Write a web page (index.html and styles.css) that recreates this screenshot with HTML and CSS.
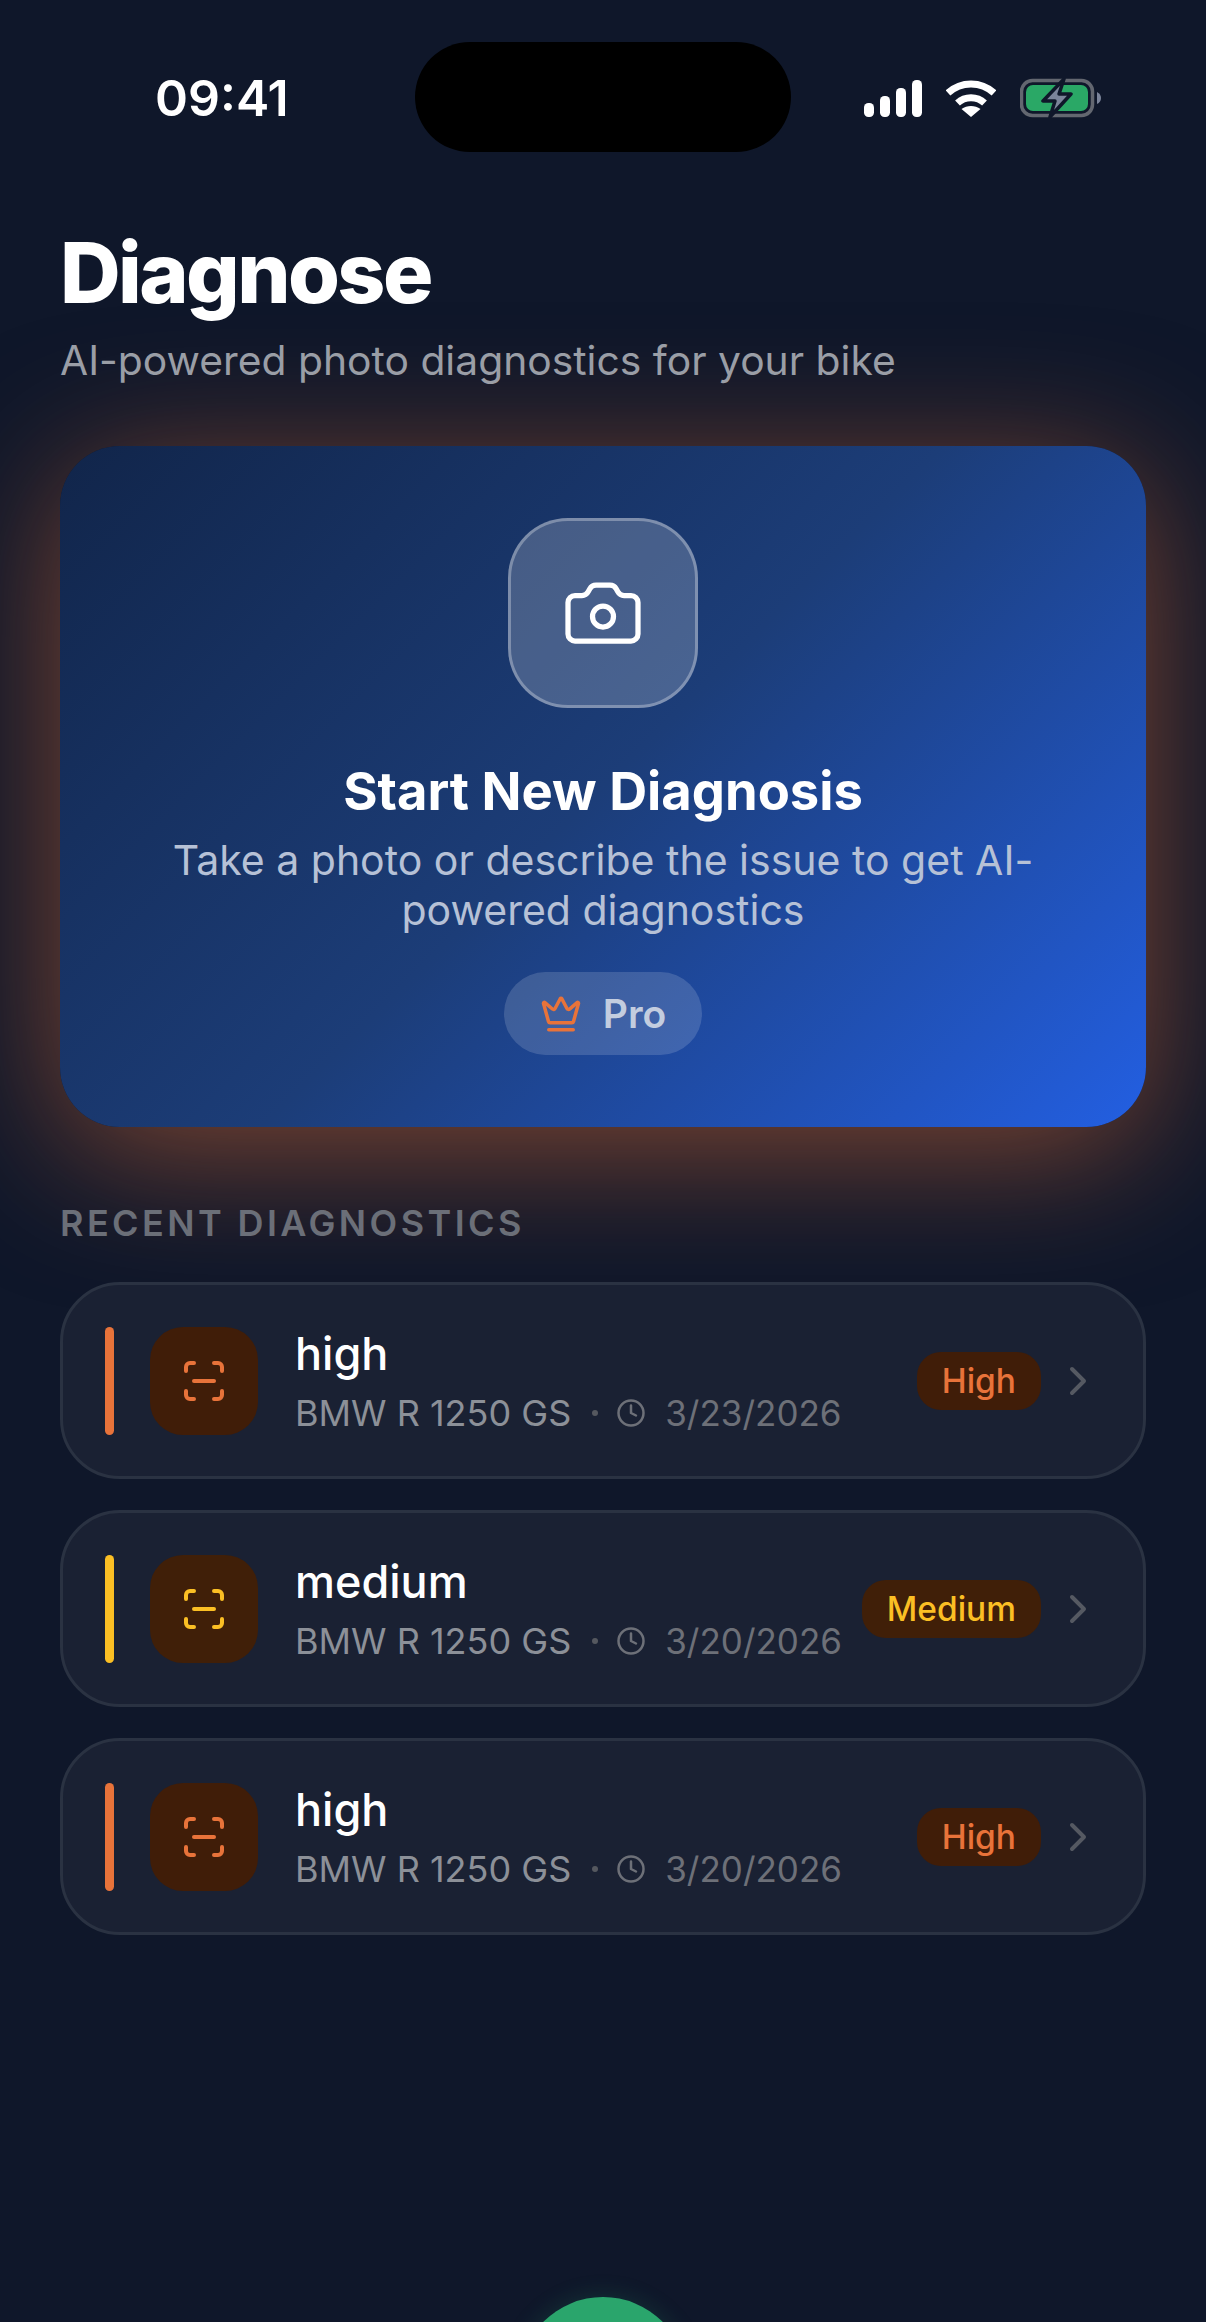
FILE: index.html
```html
<!DOCTYPE html>
<html lang="en">

<head>
	<meta charset="UTF-8">
	<meta name="viewport" content="width=device-width, initial-scale=1.0">
	<title>Diagnose</title>

	<link rel="stylesheet" href="styles.css">
</head>

<body>

	<div class="phone">

		<div class="status-bar">
			<span class="status-time">09:41</span>
			<div class="status-icons">
				<svg class="icon-signal" viewBox="0 0 58 37">
					<rect x="0" y="23" width="10" height="14" rx="4.5" />
					<rect x="16" y="16" width="10" height="21" rx="4.5" />
					<rect x="32" y="8" width="10" height="29" rx="4.5" />
					<rect x="48" y="0" width="10" height="37" rx="4.5" />
				</svg>
				<svg class="icon-wifi" viewBox="0 0 50 37">
					<path d="M2 13 C15 1 35 1 48 13" />
					<path d="M11.5 23 C19 16 31 16 38.5 23" />
					<path class="wifi-dot" d="M25 37 L15.5 29 C21 25 29 25 34.5 29 Z" />
				</svg>
				<svg class="icon-battery" viewBox="0 0 82 40">
					<rect x="1.5" y="2.5" width="71" height="35" rx="11" fill="none" stroke="#636770" stroke-width="3.5" />
					<rect x="6" y="7" width="62" height="26" rx="7" fill="#2aa866" />
					<path d="M77 14 Q81 16 81 20 Q81 24 77 26 Z" fill="#7b849a" />
					<path d="M44 1 L23 23 H35 L30 39 L51 16 H39 Z" fill="#7b849a" stroke="#0f172a" stroke-width="3.5" stroke-linejoin="round" />
				</svg>
			</div>
		</div>

		<div class="island"></div>

		<main class="content">

			<h1 class="page-title">Diagnose</h1>
			<p class="page-sub">AI-powered photo diagnostics for your bike</p>

			<section class="start-card">
				<div class="camera-box">
					<svg class="lucide icon-camera" viewBox="0 0 24 24">
						<path d="M13.997 4a2 2 0 0 1 1.76 1.05l.486.9A2 2 0 0 0 18.003 7H20a2 2 0 0 1 2 2v9a2 2 0 0 1-2 2H4a2 2 0 0 1-2-2V9a2 2 0 0 1 2-2h1.997a2 2 0 0 0 1.759-1.048l.489-.904A2 2 0 0 1 10.004 4z" />
						<circle cx="12" cy="13" r="3" />
					</svg>
				</div>
				<h2 class="start-title">Start New Diagnosis</h2>
				<p class="start-text">Take a photo or describe the issue to get AI-powered diagnostics</p>
				<div class="pro-pill">
					<svg class="lucide icon-crown" viewBox="0 0 24 24">
						<path d="M11.562 3.266a.5.5 0 0 1 .876 0L15.39 8.87a1 1 0 0 0 1.516.294L21.183 5.5a.5.5 0 0 1 .798.519l-2.834 10.246a1 1 0 0 1-.956.734H5.81a1 1 0 0 1-.957-.734L2.02 6.02a.5.5 0 0 1 .798-.519l4.276 3.664a1 1 0 0 0 1.516-.294z" />
						<path d="M5 21h14" />
					</svg>
					<span>Pro</span>
				</div>
			</section>

			<h3 class="section-label">RECENT DIAGNOSTICS</h3>

			<ul class="diag-list">
				<li class="diag-item high">
					<span class="diag-bar"></span>
					<div class="diag-icon">
						<svg class="lucide icon-scan" viewBox="0 0 24 24">
							<path d="M3 7V5a2 2 0 0 1 2-2h2" />
							<path d="M17 3h2a2 2 0 0 1 2 2v2" />
							<path d="M21 17v2a2 2 0 0 1-2 2h-2" />
							<path d="M7 21H5a2 2 0 0 1-2-2v-2" />
							<path d="M7 12h10" />
						</svg>
					</div>
					<div class="diag-info">
						<div class="diag-name">high</div>
						<div class="diag-meta">
							<span>BMW R 1250 GS</span>
							<span class="meta-dot"></span>
							<svg class="lucide icon-clock" viewBox="0 0 24 24">
								<circle cx="12" cy="12" r="10" />
								<path d="M12 6v6l4 2" />
							</svg>
							<span class="meta-date">3/23/2026</span>
						</div>
					</div>
					<span class="diag-badge">High</span>
					<svg class="lucide icon-chevron" viewBox="0 0 24 24">
						<path d="m9 18 6-6-6-6" />
					</svg>
				</li>
				<li class="diag-item medium">
					<span class="diag-bar"></span>
					<div class="diag-icon">
						<svg class="lucide icon-scan" viewBox="0 0 24 24">
							<path d="M3 7V5a2 2 0 0 1 2-2h2" />
							<path d="M17 3h2a2 2 0 0 1 2 2v2" />
							<path d="M21 17v2a2 2 0 0 1-2 2h-2" />
							<path d="M7 21H5a2 2 0 0 1-2-2v-2" />
							<path d="M7 12h10" />
						</svg>
					</div>
					<div class="diag-info">
						<div class="diag-name">medium</div>
						<div class="diag-meta">
							<span>BMW R 1250 GS</span>
							<span class="meta-dot"></span>
							<svg class="lucide icon-clock" viewBox="0 0 24 24">
								<circle cx="12" cy="12" r="10" />
								<path d="M12 6v6l4 2" />
							</svg>
							<span class="meta-date">3/20/2026</span>
						</div>
					</div>
					<span class="diag-badge">Medium</span>
					<svg class="lucide icon-chevron" viewBox="0 0 24 24">
						<path d="m9 18 6-6-6-6" />
					</svg>
				</li>
				<li class="diag-item high">
					<span class="diag-bar"></span>
					<div class="diag-icon">
						<svg class="lucide icon-scan" viewBox="0 0 24 24">
							<path d="M3 7V5a2 2 0 0 1 2-2h2" />
							<path d="M17 3h2a2 2 0 0 1 2 2v2" />
							<path d="M21 17v2a2 2 0 0 1-2 2h-2" />
							<path d="M7 21H5a2 2 0 0 1-2-2v-2" />
							<path d="M7 12h10" />
						</svg>
					</div>
					<div class="diag-info">
						<div class="diag-name">high</div>
						<div class="diag-meta">
							<span>BMW R 1250 GS</span>
							<span class="meta-dot"></span>
							<svg class="lucide icon-clock" viewBox="0 0 24 24">
								<circle cx="12" cy="12" r="10" />
								<path d="M12 6v6l4 2" />
							</svg>
							<span class="meta-date">3/20/2026</span>
						</div>
					</div>
					<span class="diag-badge">High</span>
					<svg class="lucide icon-chevron" viewBox="0 0 24 24">
						<path d="m9 18 6-6-6-6" />
					</svg>
				</li>
			</ul>

		</main>

		<div class="fab"></div>

	</div>

</body>

</html>
```

FILE: styles.css
```css
* {
	padding: 0;
	margin: 0;
	box-sizing: border-box;
}

ul {
	list-style: none;
}

body {
	background-color: #0f172a;
	font-family: "Inter", "Liberation Sans", sans-serif;
	color: #fff;
}

.phone {
	position: relative;
	width: 1206px;
	height: 2322px;
	overflow: hidden;
	background-color: #0f172a;
}

/* status bar */

.status-bar {
	display: flex;
	justify-content: space-between;
	align-items: center;
	height: 98px;
	margin-top: 49px;
	padding: 0 104px 0 155px;
}

.status-time {
	font-size: 50px;
	font-weight: 600;
}

.status-icons {
	display: flex;
	align-items: center;
	gap: 24px;
}

.icon-signal {
	width: 58px;
	height: 37px;
	fill: #fff;
}

.icon-wifi {
	width: 50px;
	height: 37px;
}

.icon-wifi path {
	fill: none;
	stroke: #fff;
	stroke-width: 7;
}

.icon-wifi .wifi-dot {
	fill: #fff;
	stroke: none;
}

.icon-battery {
	width: 82px;
	height: 40px;
}

.island {
	position: absolute;
	top: 42px;
	left: 415px;
	width: 376px;
	height: 110px;
	border-radius: 55px;
	background-color: #000;
}

/* page */

.content {
	padding: 0 60px;
}

.lucide {
	fill: none;
	stroke: currentColor;
	stroke-width: 2;
	stroke-linecap: round;
	stroke-linejoin: round;
}

.page-title {
	margin-top: 79px;
	font-size: 84px;
	font-weight: 800;
	line-height: 94px;
	letter-spacing: -2.6px;
}

.page-sub {
	margin-top: 16px;
	font-size: 40.8px;
	line-height: 48px;
	color: #9a9ea6;
}

/* start card */

.start-card {
	display: flex;
	flex-direction: column;
	align-items: center;
	height: 681px;
	margin-top: 62px;
	padding: 72px 72px 0;
	border-radius: 60px;
	background: linear-gradient(135deg, #11254a 0%, #1c3d78 50%, #235fe2 100%);
	box-shadow: 0 24px 140px rgba(232, 115, 58, 0.52);
	text-align: center;
}

.camera-box {
	display: flex;
	justify-content: center;
	align-items: center;
	width: 190px;
	height: 190px;
	border: 3px solid rgba(255, 255, 255, 0.3);
	border-radius: 60px;
	background-color: rgba(255, 255, 255, 0.2);
}

.icon-camera {
	width: 84px;
	height: 84px;
	stroke-width: 1.5;
}

.start-title {
	margin-top: 52px;
	font-size: 52.5px;
	font-weight: 700;
	line-height: 62px;
}

.start-text {
	margin-top: 13px;
	font-size: 41px;
	line-height: 50px;
	color: #b6c1d6;
}

.pro-pill {
	display: flex;
	align-items: center;
	gap: 21px;
	height: 83px;
	margin-top: 37px;
	padding: 0 36px;
	border-radius: 42px;
	background-color: rgba(255, 255, 255, 0.15);
	font-size: 39px;
	font-weight: 600;
	color: #c3cddf;
}

.icon-crown {
	width: 42px;
	height: 42px;
	color: #e8733a;
}

/* recent list */

.section-label {
	margin-top: 74px;
	font-size: 36px;
	font-weight: 600;
	line-height: 44px;
	letter-spacing: 3.4px;
	color: #6b6f78;
}

.diag-list {
	display: flex;
	flex-direction: column;
	gap: 31px;
	margin-top: 37px;
}

.diag-item {
	display: flex;
	align-items: center;
	height: 197px;
	padding: 0 41px 0 42px;
	border: 3px solid #2a3242;
	border-radius: 60px;
	background-color: #1a2133;
}

.diag-bar {
	width: 9px;
	height: 108px;
	border-radius: 4.5px;
}

.diag-icon {
	display: flex;
	justify-content: center;
	align-items: center;
	width: 108px;
	height: 108px;
	margin-left: 36px;
	border-radius: 33px;
}

.icon-scan {
	width: 48px;
	height: 48px;
}

.diag-info {
	flex: 1;
	margin-left: 37px;
}

.diag-name {
	font-size: 45px;
	font-weight: 500;
	line-height: 54px;
}

.diag-meta {
	display: flex;
	align-items: center;
	margin-top: 10px;
	font-size: 36px;
	line-height: 44px;
	color: #8c9098;
}

.meta-dot {
	width: 6px;
	height: 6px;
	margin: 0 18px 0 21px;
	border-radius: 50%;
	background-color: #55585f;
}

.icon-clock {
	width: 30px;
	height: 30px;
	margin-right: 19px;
	color: #6d7078;
}

.meta-date {
	font-size: 35px;
	color: #6d7078;
}

.diag-badge {
	height: 58px;
	padding: 0 25px;
	border-radius: 24px;
	font-size: 33.5px;
	font-weight: 500;
	line-height: 58px;
}

.icon-chevron {
	width: 48px;
	height: 48px;
	margin-left: 13px;
	color: #555962;
}

.high .diag-bar {
	background-color: #e8733a;
}

.high .diag-icon,
.high .diag-badge {
	background-color: #401d08;
	color: #e8733a;
}

.medium .diag-bar {
	background-color: #fbbf24;
}

.medium .diag-icon,
.medium .diag-badge {
	background-color: #401f08;
	color: #fbbf24;
}

/* green button, cut off by the bottom edge */

.fab {
	position: absolute;
	left: 519px;
	top: 2297px;
	width: 168px;
	height: 168px;
	border-radius: 50%;
	background-color: #2aa56c;
	box-shadow: 0 0 24px rgba(42, 165, 108, 0.2);
}
```
